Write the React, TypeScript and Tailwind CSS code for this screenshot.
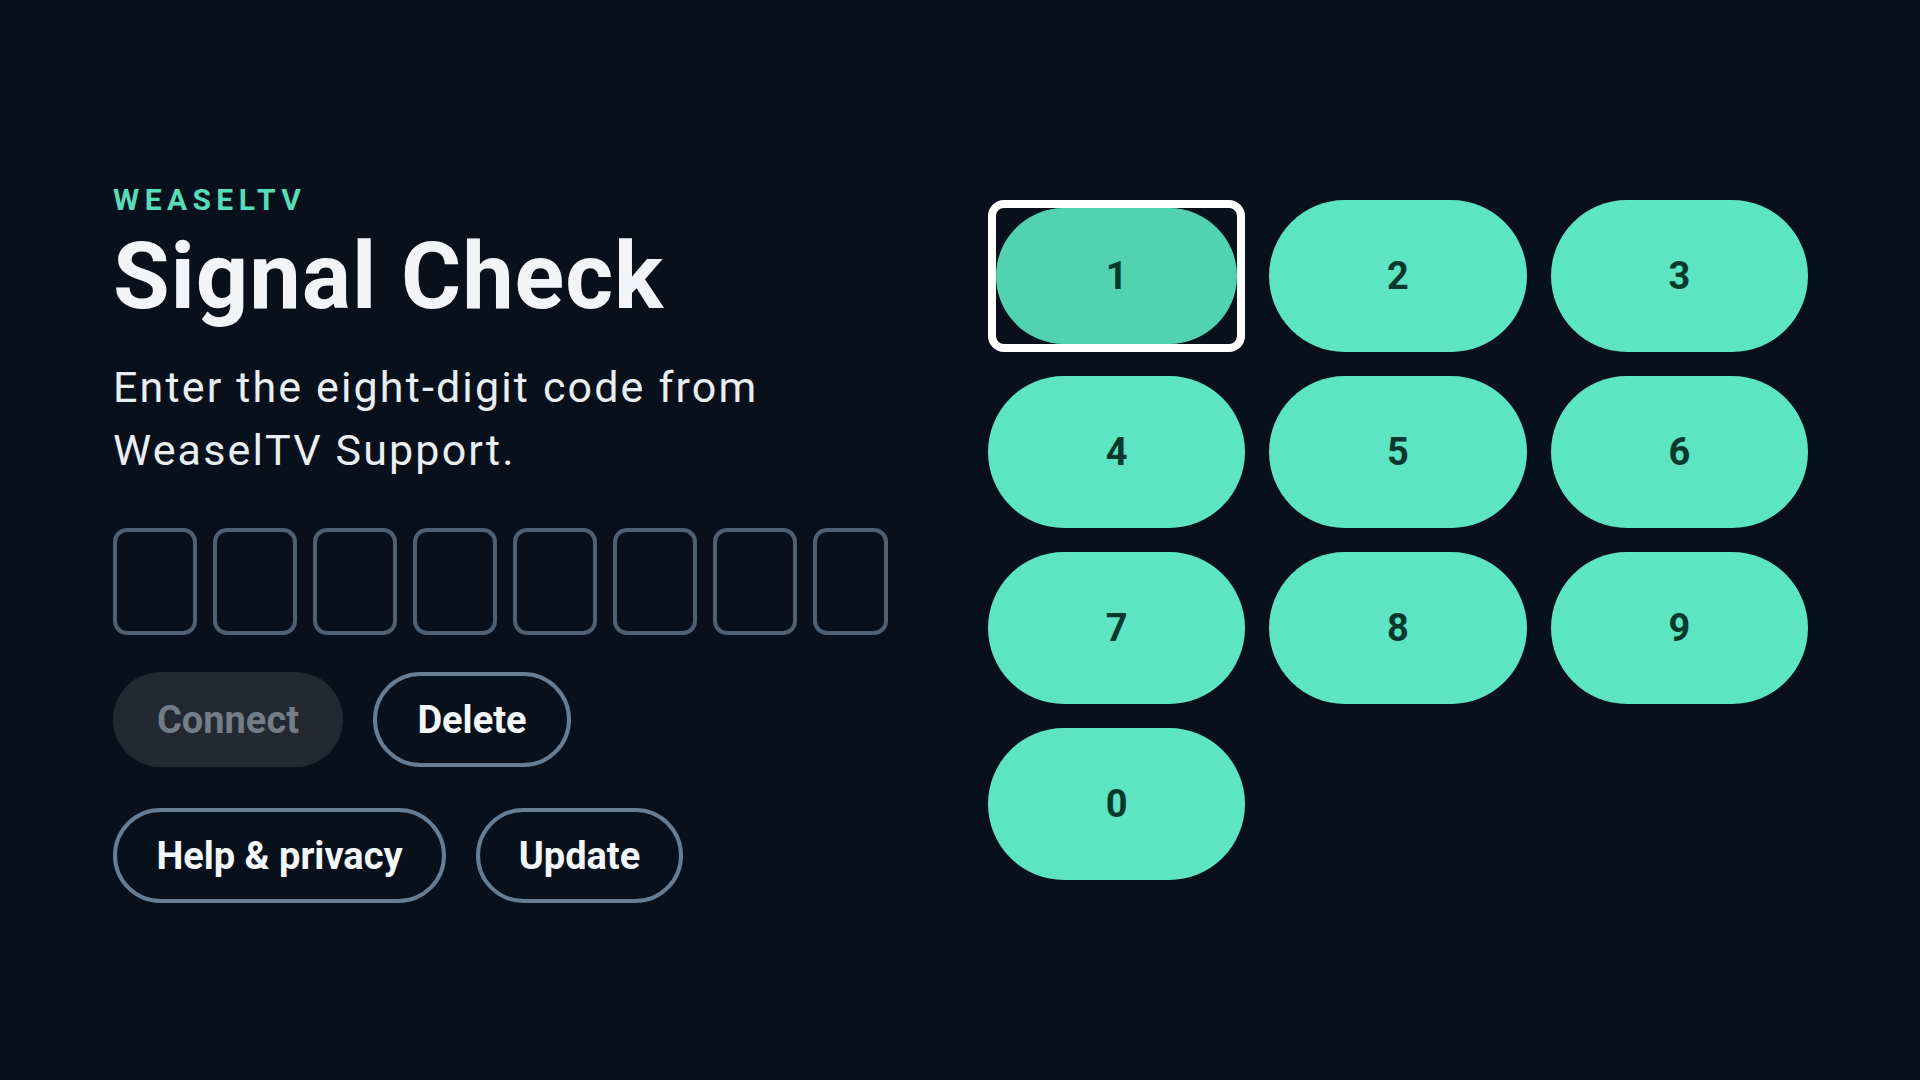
import React, { useState } from "react"

const digits = ["1", "2", "3", "4", "5", "6", "7", "8", "9", "0"]

export default function App() {
  const [code, setCode] = useState<string[]>([])
  const [focused, setFocused] = useState("1")

  const press = (d: string) => {
    setFocused(d)
    if (code.length < 8) setCode([...code, d])
  }

  return (
    <main
      className="flex items-center w-full h-screen bg-[#08111b] pl-[113px] text-[#f1f5f9]"
      style={{ fontFamily: "Roboto, 'Liberation Sans', sans-serif" }}
    >
      <div className="flex flex-col w-[875px] shrink-0 mt-[4px]">
        <p className="text-[30px] leading-[36px] font-bold tracking-[0.18em] text-[#55dcb9]">
          WEASELTV
        </p>
        <h1 className="mt-[13px] text-[92px] leading-none font-bold tracking-[0.01em]">
          Signal Check
        </h1>
        <p className="mt-[33px] w-[760px] text-[43px] leading-[63px] tracking-[0.05em] text-[#e9eef3]">
          Enter the eight-digit code from WeaselTV Support.
        </p>

        <div className="flex gap-4 mt-[46px]">
          {Array.from({ length: 8 }).map((_, i) => (
            <div
              key={i}
              className={
                (i === 7 ? "w-[75px]" : "w-[84px]") +
                " h-[107px] flex items-center justify-center rounded-[14px] border-4 border-[#4f6072] text-[44px] font-bold"
              }
            >
              {code[i] ?? ""}
            </div>
          ))}
        </div>

        <div className="flex gap-[30px] mt-[37px]">
          <button
            disabled
            className="h-[95px] w-[230px] pt-[3px] rounded-full bg-[#222932] text-[38px] font-bold text-[#737d88]"
          >
            Connect
          </button>
          <OutlineButton label="Delete" width="w-[198px]" onClick={() => setCode(code.slice(0, -1))} />
        </div>

        <div className="flex gap-[30px] mt-[41px]">
          <OutlineButton label="Help & privacy" width="w-[333px]" />
          <OutlineButton label="Update" width="w-[207px]" />
        </div>
      </div>

      <div className="grid grid-cols-3 gap-6 w-[820px]">
        {digits.map((d) =>
          d === focused ? (
            <button
              key={d}
              onClick={() => press(d)}
              className="h-[152px] rounded-[16px] border-8 border-white p-0"
            >
              <span className="flex items-center justify-center w-full h-full rounded-full bg-[#51d3b2] text-[38px] font-bold text-[#06382c]">
                {d}
              </span>
            </button>
          ) : (
            <button
              key={d}
              onClick={() => press(d)}
              className="h-[152px] flex items-center justify-center rounded-full bg-[#5ce4c3] text-[38px] font-bold text-[#06382c]"
            >
              {d}
            </button>
          )
        )}
      </div>
    </main>
  )
}

function OutlineButton({
  label,
  width,
  onClick,
}: {
  label: string
  width: string
  onClick?: () => void
}) {
  return (
    <button
      onClick={onClick}
      className={
        width +
        " h-[95px] pt-[3px] rounded-full border-4 border-[#687d91] text-[38px] font-bold text-[#f4f7fa]"
      }
    >
      {label}
    </button>
  )
}
